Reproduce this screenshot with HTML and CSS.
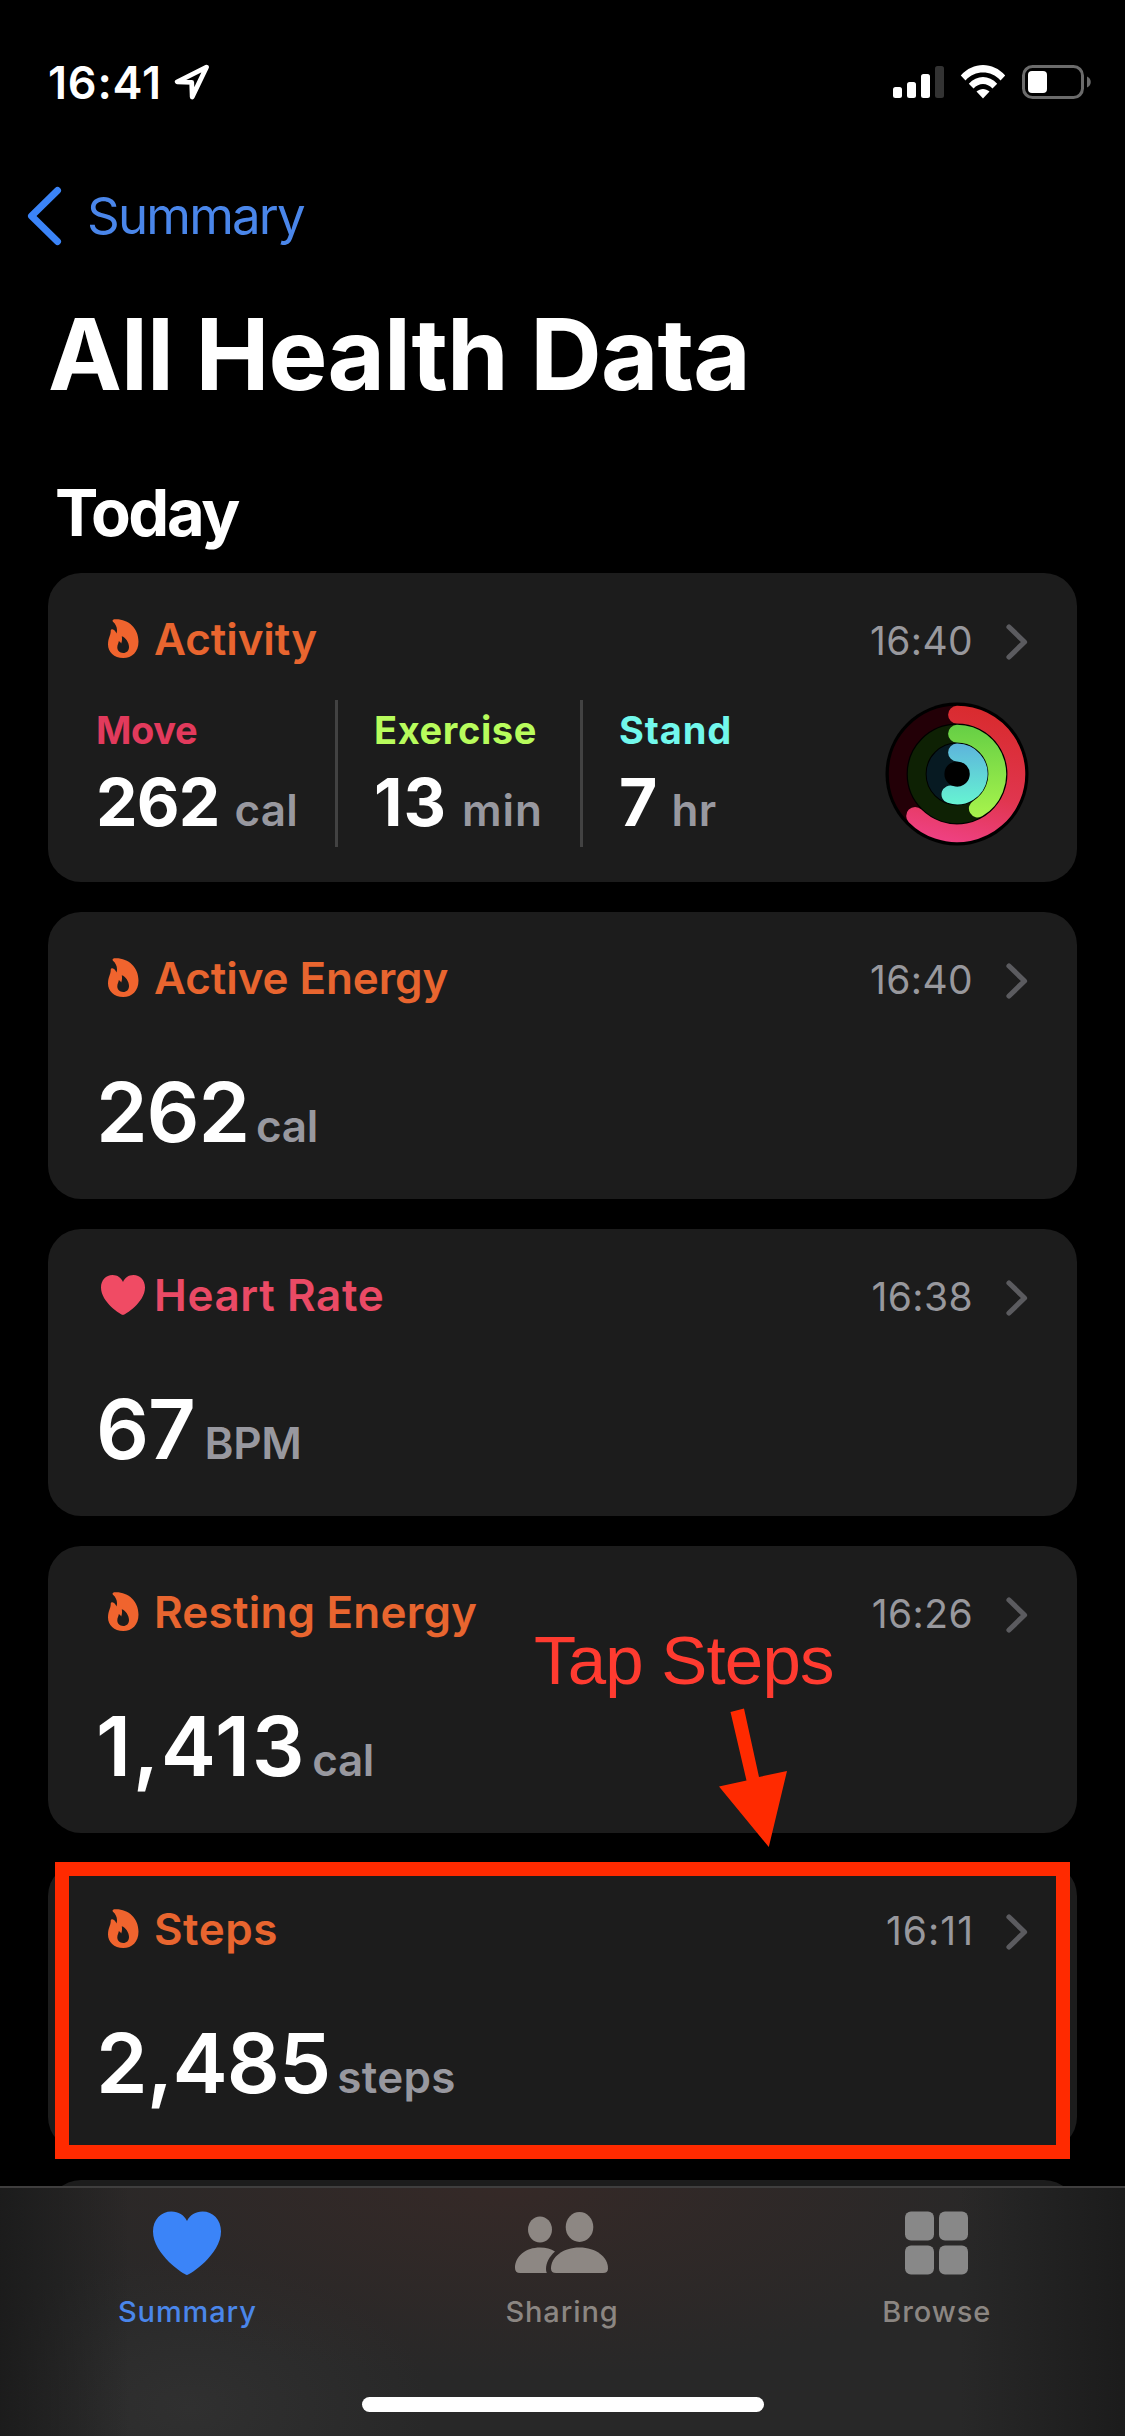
FILE: index.html
```html
<!DOCTYPE html>
<html lang="en">
<head>
  <meta charset="UTF-8">
  <title>All Health Data</title>
  <meta name="viewport" content="width=device-width,initial-scale=1.0">
  <link rel="stylesheet" href="styles.css">
</head>
<body>
  <!-- shared icons -->
  <svg width="0" height="0" class="defs">
    <symbol id="flame" viewBox="0 0 31 40">
      <path fill-rule="evenodd" d="M7 .3C20-.3 30.5 9 30.5 22.5C30.5 33 24 39 15.2 39C6 39 0 33 0 25.5C0 19 3 16 2.7 12C2.6 10 4.5 9.6 6 11C7.3 12.2 8 13.2 8.5 14.5C9.8 10 8.5 6 5 2.8C3.8 1.5 5 .3 7 .3ZM13.8 17.3C17.5 18.5 21 23.5 21 28C21 31.8 18.6 34 15.2 34C11.6 34 9.3 31.5 9.3 28.3C9.3 25.5 10.7 24.5 10.7 22.3C11.8 22.6 12.6 23.4 13.2 24.6C14.2 22 14.2 19.8 13.8 17.3Z"/>
    </symbol>
    <symbol id="heart" viewBox="0 0 44 40">
      <path d="M22 40C20.500 40 0 27.500 0 12.500C0 5 5 0 11.500 0C16.500 0 20.300 2.800 22 7C23.700 2.800 27.500 0 32.500 0C39 0 44 5 44 12.500C44 27.500 23.500 40 22 40Z"/>
    </symbol>
    <symbol id="chevron" viewBox="0 0 22 36">
      <path d="M3 3L18.500 18L3 33" fill="none" stroke="currentColor" stroke-width="5.200" stroke-linecap="round" stroke-linejoin="round"/>
    </symbol>
  </svg>

  <div class="screen">
    <div class="status-bar">
      <span class="clock">16:41</span>
      <svg class="location" width="36" height="37" viewBox="0 0 36 37">
        <path d="M32.500 3.200L3.200 17.800L17.700 18.300L18.200 33L32.500 3.200Z" fill="none" stroke="#fff" stroke-width="4.800" stroke-linejoin="round"/>
      </svg>
      <svg class="signal" width="52" height="34" viewBox="0 0 52 34">
        <rect x="0" y="22" width="9" height="11" rx="2.500" fill="#fff"/>
        <rect x="14" y="17" width="9" height="16" rx="2.500" fill="#fff"/>
        <rect x="28" y="9" width="9" height="24" rx="2.500" fill="#fff"/>
        <rect x="42" y="1" width="9" height="32" rx="2.500" fill="#333"/>
      </svg>
      <svg class="wifi" width="46" height="34" viewBox="0 0 46 34">
        <path d="M.8 10.600C13-3.400 33-3.400 45.200 10.600L40.500 15.400C31 5 15 5 5.500 15.400Z"/>
        <path d="M8.800 18.800C17 9.800 29 9.800 37.200 18.800L32.500 23.400C27 17.400 19 17.400 13.500 23.400Z"/>
        <path d="M16.500 26.500C20.500 23 25.500 23 29.500 26.500L23 33.500Z"/>
      </svg>
      <svg class="battery" width="70" height="35" viewBox="0 0 70 35">
        <rect x="1.500" y="1.500" width="59" height="31" rx="9" fill="none" stroke="#6b6b6b" stroke-width="3"/>
        <rect x="6" y="6" width="19" height="22" rx="4" fill="#fff"/>
        <path d="M65 11.500C70 13.500 70 20.500 65 22.500Z" fill="#6b6b6b"/>
      </svg>
    </div>

    <div class="nav">
      <svg width="36" height="60" viewBox="0 0 36 60">
        <path d="M31.500 4.500L5.500 30L31.500 55.500" fill="none" stroke="#3b84f8" stroke-width="7" stroke-linecap="round" stroke-linejoin="round"/>
      </svg>
      <span class="nav-label">Summary</span>
    </div>
    <h1 class="title">All Health Data</h1>
    <h2 class="section-title">Today</h2>

    <div class="cards">
      <div class="card card-activity">
        <div class="card-head">
          <span class="icon-slot"><svg class="flame"><use href="#flame"/></svg></span>
          <span class="card-name">Activity</span>
          <span class="card-time">16:40</span>
          <svg class="chevron"><use href="#chevron"/></svg>
        </div>
        <div class="stats">
          <div class="stat move">
            <div class="stat-label">Move</div>
            <div class="stat-value">262<span class="stat-unit">cal</span></div>
          </div>
          <div class="stat exercise">
            <div class="stat-label">Exercise</div>
            <div class="stat-value">13<span class="stat-unit">min</span></div>
          </div>
          <div class="stat stand">
            <div class="stat-label">Stand</div>
            <div class="stat-value">7<span class="stat-unit">hr</span></div>
          </div>
          <svg class="rings" width="144" height="144" viewBox="-72 -72 144 144">
            <defs>
              <linearGradient id="gMove" gradientUnits="userSpaceOnUse" x1="10" y1="-66" x2="-20" y2="66">
                <stop offset="0" stop-color="#d92b2f"/>
                <stop offset=".6" stop-color="#e0364f"/>
                <stop offset="1" stop-color="#ef4183"/>
              </linearGradient>
              <linearGradient id="gExercise" gradientUnits="userSpaceOnUse" x1="0" y1="-48" x2="0" y2="44">
                <stop offset="0" stop-color="#66cf45"/>
                <stop offset="1" stop-color="#a8f44c"/>
              </linearGradient>
              <linearGradient id="gStand" gradientUnits="userSpaceOnUse" x1="0" y1="-30" x2="0" y2="30">
                <stop offset="0" stop-color="#5db4dc"/>
                <stop offset="1" stop-color="#66f3d2"/>
              </linearGradient>
            </defs>
            <circle r="71.500" fill="#000"/>
            <g fill="none" stroke-width="17.800" stroke-linecap="round">
              <circle r="59.300" stroke="#230007"/>
              <circle r="40.300" stroke="#0e2104"/>
              <circle r="21.500" stroke="#071a22"/>
              <path d="M0-59.300A59.300 59.300 0 1 1-41.900 41.900" stroke="url(#gMove)"/>
              <path d="M0-40.300A40.300 40.300 0 0 1 20.800 34.500" stroke="url(#gExercise)"/>
              <path d="M0-21.500A21.500 21.500 0 1 1-6.600 20.400" stroke="url(#gStand)"/>
            </g>
          </svg>
        </div>
      </div>

      <div class="card">
        <div class="card-head">
          <span class="icon-slot"><svg class="flame"><use href="#flame"/></svg></span>
          <span class="card-name">Active Energy</span>
          <span class="card-time">16:40</span>
          <svg class="chevron"><use href="#chevron"/></svg>
        </div>
        <div class="value">262<span class="unit">cal</span></div>
      </div>

      <div class="card card-heart">
        <div class="card-head">
          <span class="icon-slot"><svg class="heart"><use href="#heart"/></svg></span>
          <span class="card-name">Heart Rate</span>
          <span class="card-time">16:38</span>
          <svg class="chevron"><use href="#chevron"/></svg>
        </div>
        <div class="value">67<span class="unit">BPM</span></div>
      </div>

      <div class="card card-resting">
        <div class="card-head">
          <span class="icon-slot"><svg class="flame"><use href="#flame"/></svg></span>
          <span class="card-name">Resting Energy</span>
          <span class="card-time">16:26</span>
          <svg class="chevron"><use href="#chevron"/></svg>
        </div>
        <div class="value">1,413<span class="unit">cal</span></div>
        <div class="hint">Tap Steps</div>
        <svg class="hint-arrow" width="70" height="140" viewBox="0 0 70 140">
          <path d="M12.500 5L26 1.500L41 70L69 64L50.800 140L1 79.500L28.500 73.500Z" fill="#ff2a00"/>
        </svg>
      </div>

      <div class="card card-steps">
        <div class="card-head">
          <span class="icon-slot"><svg class="flame"><use href="#flame"/></svg></span>
          <span class="card-name">Steps</span>
          <span class="card-time">16:11</span>
          <svg class="chevron"><use href="#chevron"/></svg>
        </div>
        <div class="value">2,485<span class="unit">steps</span></div>
        <div class="highlight"></div>
      </div>

      <div class="card"></div>
    </div>

    <div class="tab-bar">
      <div class="tab active">
        <svg width="68" height="64" viewBox="0 0 68 64">
          <path d="M34 64C31.500 64 0 43.500 0 20.500C0 8.500 8 .5 18.500 .5C25.500 .5 31 4 34 10C37 4 42.500 .5 49.500 .5C60 .5 68 8.500 68 20.500C68 43.500 36.500 64 34 64Z" fill="#3b84f8"/>
        </svg>
        <span class="tab-label">Summary</span>
      </div>
      <div class="tab">
        <svg width="94" height="64" viewBox="0 0 94 64" fill="#8d8783">
          <ellipse cx="25" cy="18.500" rx="12" ry="13"/>
          <ellipse cx="64.500" cy="16" rx="13.800" ry="15"/>
          <path d="M5 62Q0 62 0 57C0 45 11 36.500 25 36.500C31 36.500 36 38 40 40.500C34 46 31 52 31 58Q31 60.500 31.800 62Z"/>
          <path d="M41 62Q36 62 36 57.500C36 46 48 36.500 64.500 36.500C81 36.500 93 46 93 57.500Q93 62 88 62Z"/>
        </svg>
        <span class="tab-label">Sharing</span>
      </div>
      <div class="tab">
        <svg width="63" height="64" viewBox="0 0 63 64" fill="#888">
          <rect x="0" y=".5" width="29" height="29" rx="6"/>
          <rect x="34" y=".5" width="29" height="29" rx="6"/>
          <rect x="0" y="34.500" width="29" height="29" rx="6"/>
          <rect x="34" y="34.500" width="29" height="29" rx="6"/>
        </svg>
        <span class="tab-label">Browse</span>
      </div>
      <div class="home-indicator"></div>
    </div>
  </div>
</body>
</html>
```
FILE: styles.css
```css
html, body {
  margin: 0; padding: 0;
  background: #000;
  font-family: Inter, "Liberation Sans", sans-serif;
  color: #fff;
}
.defs { position: absolute; }
.screen {
  width: 1125px; height: 2436px;
  position: relative; overflow: hidden;
}
svg { display: block; flex: none; }

/* Top */
.status-bar {
  height: 164px; box-sizing: border-box; padding: 0 33px 0 48px;
  display: flex; align-items: center;
}
.clock { font-size: 45px; font-weight: 600; letter-spacing: .8px; width: 126px; white-space: nowrap; }
.location { margin-right: auto; }
.signal { margin-right: 15px; }
.wifi { margin-right: 16px; fill: #fff; }
.nav {
  height: 103px; padding-left: 26px;
  display: flex; align-items: center;
  color: #4a86ea;
}
.nav-label { font-size: 51px; margin-left: 25px; letter-spacing: -1.8px; }
.title {
  margin: 0; padding-left: 48px;
  font-size: 99px; line-height: 174px; font-weight: 700; letter-spacing: -.9px;
}
.section-title {
  margin: 0; padding: 12px 0 0 55px;
  font-size: 65px; line-height: 120px; font-weight: 700; letter-spacing: -2.4px;
}

/* Cards */
.cards {
  display: flex; flex-direction: column; gap: 30px;
  padding: 0 48px;
}
.card {
  height: 287px; box-sizing: border-box; flex: none;
  padding: 44px 49px 0 48px;
  background: #1c1c1c; border-radius: 33px;
  position: relative; color: #e8652f;
}
.card-activity { height: 309px; }
.card-heart { color: #ea4a65; }
.card-head { display: flex; align-items: center; height: 44px; }
.icon-slot { width: 54px; display: flex; justify-content: center; }
.flame { width: 31px; height: 40px; fill: #f0642e; }
.heart { width: 44px; height: 40px; fill: #f04b64; }
.card-name {
  font-size: 44px; line-height: 44px; font-weight: 600;
  margin-left: 4px; margin-right: auto; letter-spacing: -.1px;
}
.card-heart .card-name { letter-spacing: .6px; }
.card-resting .card-name { letter-spacing: .2px; }
.card-steps .card-name { letter-spacing: .5px; }
.card-time {
  font-size: 39px; line-height: 40px; color: #98989d;
  margin: 4px 33px 0 0; letter-spacing: .4px;
}
.card-steps .card-time { letter-spacing: 1px; margin-right: 32px; }
.chevron { width: 22px; height: 36px; color: #5b5b5f; margin-top: 5px; }
.value {
  margin-top: 70px; height: 84px;
  font-size: 83px; line-height: 84px; font-weight: 600; color: #fff;
  white-space: nowrap; letter-spacing: -1.2px;
}
.unit {
  font-size: 44px; line-height: 44px; font-weight: 600; color: #98989f;
  margin-left: 7px; letter-spacing: -.3px;
}
.card-heart .unit { margin-left: 10px; }
.card-resting .value { letter-spacing: 1.6px; }
.card-resting .unit { margin-left: 6px; letter-spacing: -.3px; }
.card-steps .value { letter-spacing: -.9px; }
.card-steps .unit { margin-left: 7px; letter-spacing: .3px; }

.stats { display: flex; height: 147px; margin-top: 39px; }
.stat { padding-top: 10px; box-sizing: border-box; }
.stat-label { font-size: 38px; line-height: 40px; font-weight: 700; }
.stat-value {
  font-size: 66px; line-height: 66px; font-weight: 700; color: #fff;
  margin-top: 19px; white-space: nowrap; letter-spacing: -.8px;
}
.stat-unit {
  font-size: 44px; line-height: 44px; font-weight: 600; color: #98989f;
  margin-left: 15px; letter-spacing: .2px;
}
.move { width: 239px; }
.move .stat-label { color: #e23a5c; letter-spacing: -.4px; }
.exercise { width: 245px; border-left: 3px solid #424242; padding-left: 36px; }
.exercise .stat-label { color: #b8fc5c; letter-spacing: .6px; }
.exercise .stat-value { letter-spacing: 1px; }
.exercise .stat-unit { letter-spacing: .9px; }
.stand { border-left: 3px solid #424242; padding-left: 36px; }
.stand .stat-label { color: #72f8ec; letter-spacing: .9px; }
.rings { margin: 2px -1px 0 auto; }

/* Callout over the list */
.hint {
  position: absolute; left: 486px; top: 77px;
  font-family: "Liberation Sans", Arial, sans-serif;
  font-size: 69px; line-height: 76px; color: #ff3b30; white-space: nowrap;
  letter-spacing: -.8px;
}
.hint-arrow { position: absolute; left: 670px; top: 161px; z-index: 2; }
.highlight {
  position: absolute; left: 7px; top: -1px;
  width: 1015px; height: 297px; box-sizing: border-box;
  border: 14px solid #ff2a00;
}

/* Bottom tabs */
.tab-bar {
  position: absolute; left: 0; bottom: 0;
  width: 1125px; height: 250px; box-sizing: border-box;
  border-top: 2px solid #3f3e3e;
  padding-right: 1px;
  display: flex; z-index: 3;
  background:
    linear-gradient(90deg, rgba(27,27,27,.95) 0, rgba(27,27,27,0) 130px, rgba(27,27,27,0) 960px, rgba(27,27,27,.95) 100%),
    radial-gradient(ellipse 520px 190px at 510px 0, #352927 0, rgba(53,41,39,0) 100%),
    radial-gradient(ellipse 240px 150px at 190px 220px, #303030 0, rgba(48,48,48,0) 100%),
    #282828;
}
.tab {
  flex: 1; padding-top: 23px;
  display: flex; flex-direction: column; align-items: center;
  color: #8b8682;
}
.tab-label { font-size: 29px; line-height: 34px; margin-top: 20px; font-weight: 500; letter-spacing: .9px; }
.tab.active { color: #4a86ea; }
.home-indicator {
  position: absolute; left: 362px; bottom: 24px;
  width: 402px; height: 15px; border-radius: 8px; background: #fff;
}
```
